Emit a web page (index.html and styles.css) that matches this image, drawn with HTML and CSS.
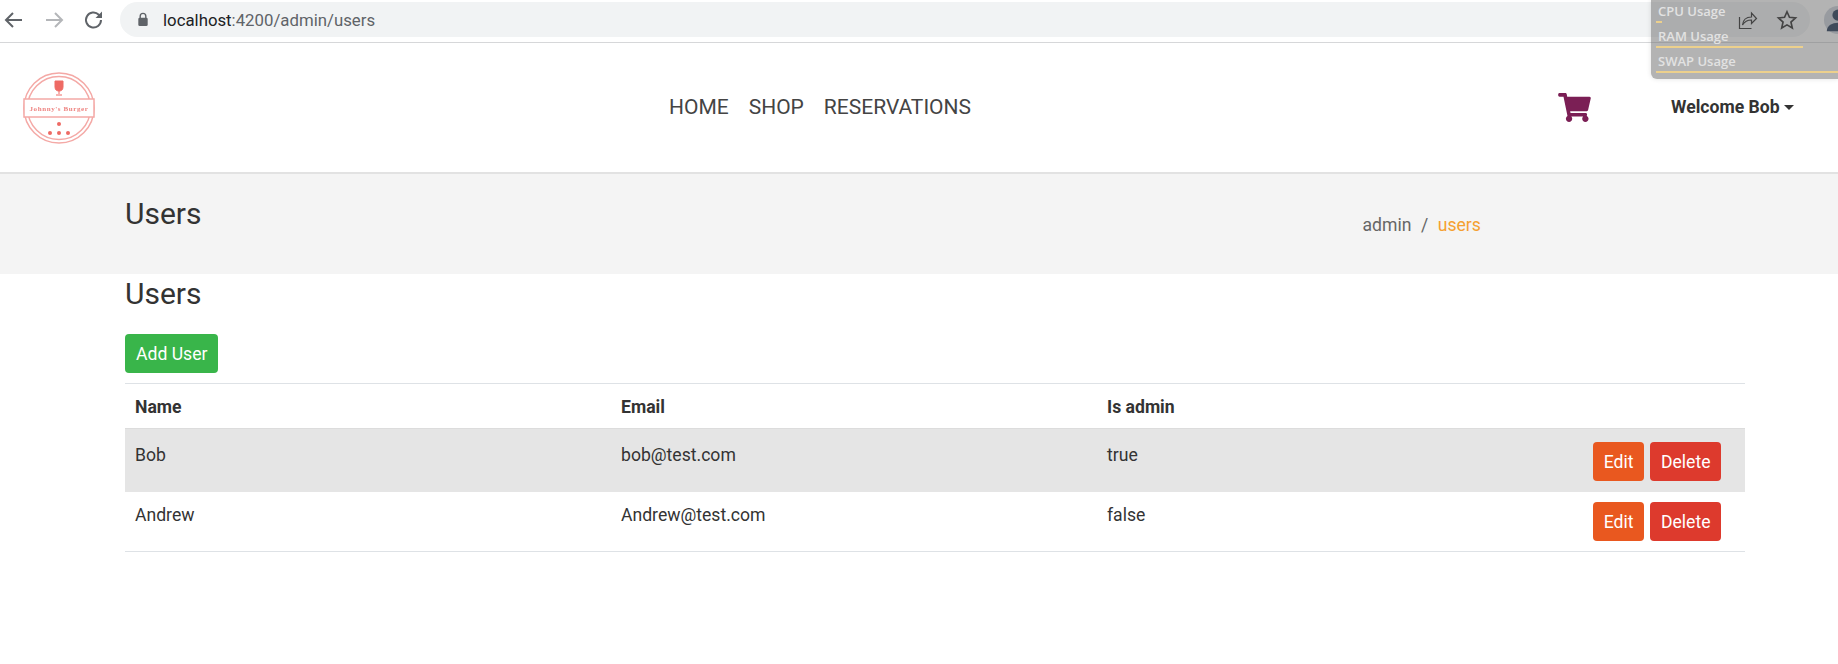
FILE: index.html
```html
<!DOCTYPE html>
<html lang="en">
<head>
  <meta charset="UTF-8" />
  <title>Users</title>
  <link rel="stylesheet" href="styles.css">
</head>
<body>
  <!-- browser toolbar -->
  <div class="chrome-bar">
    <svg class="chrome-icon" viewBox="0 0 24 24"><path d="M20 12H5M11 5l-7 7 7 7" fill="none" stroke="#5f6368" stroke-width="2"/></svg>
    <svg class="chrome-icon" viewBox="0 0 24 24"><path d="M4 12h15M13 5l7 7-7 7" fill="none" stroke="#b4b6b9" stroke-width="2"/></svg>
    <svg class="chrome-icon" viewBox="0 0 24 24"><path d="M19 12a7.5 7.5 0 1 1-2.2-5.3L19 9" fill="none" stroke="#5f6368" stroke-width="2"/><path d="M20 3.5V10h-6.500z" fill="#5f6368"/></svg>
    <div class="url-pill">
      <svg class="lock" viewBox="0 0 12 16"><path d="M3 7V4.500a3 3 0 0 1 6 0V7" fill="none" stroke="#5f6368" stroke-width="1.500"/><rect x="1" y="6" width="10" height="9" rx="1.500" fill="#5f6368"/></svg>
      <span class="url-host">localhost</span><span class="url-rest">:4200/admin/users</span>
      <div class="pill-actions">
        <svg class="share" viewBox="0 0 20 20"><path d="M1.500 7v11.500h12M4.500 15c.5-5 4-8 9-8V3l5 5.500-5 5V10c-4 0-7 1.500-9 5z" fill="none" stroke="#444" stroke-width="1.200"/></svg>
        <svg class="star" viewBox="0 0 24 24"><path d="M12 3l2.700 6.100 6.600.7-5 4.400 1.500 6.500-5.800-3.400-5.800 3.400 1.500-6.500-5-4.400 6.600-.7z" fill="none" stroke="#444" stroke-width="1.800"/></svg>
      </div>
    </div>
    <div class="avatar">
      <svg viewBox="0 0 20 20"><circle cx="10" cy="6.500" r="4" fill="#3f4a5a"/><path d="M2 18c0-4 4-6 8-6s8 2 8 6z" fill="#3f4a5a"/></svg>
    </div>
  </div>

  <!-- system monitor overlay -->
  <div class="monitor">
    <div class="monitor-row"><span>CPU Usage</span><div class="meter cpu"></div></div>
    <div class="monitor-row"><span>RAM Usage</span><div class="meter ram"></div></div>
    <div class="monitor-row"><span>SWAP Usage</span><div class="meter swap"></div></div>
  </div>

  <header class="site-header">
    <svg class="logo" viewBox="0 0 72 72">
      <circle cx="36" cy="36" r="35" fill="none" stroke="#f4a9a6" stroke-width="1.500"/>
      <circle cx="36" cy="36" r="31.500" fill="none" stroke="#f4a9a6" stroke-width="1.500"/>
      <rect x="1" y="27" width="70" height="18" fill="#fff" stroke="#f4a9a6" stroke-width="1.500"/>
      <text x="36" y="38.500" class="logo-text" text-anchor="middle">Johnny's Burger</text>
      <path d="M32 9h8v6c0 3-2 4-4 4s-4-1-4-4zM36 19v3M33 23h6" fill="#ee6a64" stroke="#ee6a64"/>
      <circle cx="36" cy="52" r="2" fill="#ee6a64"/>
      <circle cx="27" cy="61" r="2" fill="#ee6a64"/>
      <circle cx="36" cy="61" r="2" fill="#ee6a64"/>
      <circle cx="45" cy="61" r="2" fill="#ee6a64"/>
    </svg>
    <nav class="main-nav">
      <a>HOME</a>
      <a>SHOP</a>
      <a>RESERVATIONS</a>
    </nav>
    <svg class="cart" viewBox="0 0 576 512"><path d="M528.12 301.319l47.273-208C578.806 78.301 567.391 64 551.99 64H159.208l-9.166-44.81C147.758 8.021 137.93 0 126.529 0H24C10.745 0 0 10.745 0 24v16c0 13.255 10.745 24 24 24h69.883l70.248 343.435C147.325 417.1 136 435.222 136 456c0 30.928 25.072 56 56 56s56-25.072 56-56c0-15.674-6.447-29.835-16.824-40h209.647C430.447 426.165 424 440.326 424 456c0 30.928 25.072 56 56 56s56-25.072 56-56c0-22.172-12.888-41.332-31.579-50.405l5.517-24.276c3.413-15.018-8.002-29.319-23.403-29.319H218.117l-6.545-32h293.145c11.206 0 20.92-7.754 23.403-18.681z"/></svg>
    <div class="welcome">Welcome Bob<span class="caret"></span></div>
  </header>

  <section class="page-band">
    <h2 class="band-title">Users</h2>
    <div class="breadcrumb">
      <span>admin</span><span class="crumb-sep">/</span><span class="crumb-active">users</span>
    </div>
  </section>

  <main class="content">
    <h2 class="content-title">Users</h2>
    <button class="btn btn-add">Add User</button>
    <table class="user-table">
      <thead>
        <tr><th>Name</th><th>Email</th><th>Is admin</th><th></th></tr>
      </thead>
      <tbody>
        <tr class="row-first">
          <td>Bob</td><td>bob@test.com</td><td>true</td>
          <td><div class="actions"><button class="btn btn-edit">Edit</button><button class="btn btn-delete">Delete</button></div></td>
        </tr>
        <tr>
          <td>Andrew</td><td>Andrew@test.com</td><td>false</td>
          <td><div class="actions"><button class="btn btn-edit">Edit</button><button class="btn btn-delete">Delete</button></div></td>
        </tr>
      </tbody>
    </table>
  </main>
</body>
</html>
```
FILE: styles.css
```css
body {
  margin: 0;
  font-family: Roboto, Arial, sans-serif;
  font-size: 17.6px;
  color: #333;
  background: #fff;
  overflow: hidden;
}

.chrome-bar {
  display: flex;
  align-items: center;
  height: 39px;
  padding: 0 0 3px 2px;
  border-bottom: 1px solid #d6d7d9;
}
.chrome-icon {
  width: 24px;
  height: 24px;
  margin-right: 16px;
  flex: none;
}
.url-pill {
  display: flex;
  align-items: center;
  flex: none;
  width: 1690px;
  height: 35px;
  margin-left: -2px;
  padding-left: 17px;
  box-sizing: border-box;
  background: #f1f3f4;
  border-radius: 18px;
  font-size: 16.8px;
}
.lock {
  width: 12px;
  height: 15px;
  margin-right: 14px;
}
.url-host { color: #202124; }
.url-rest { color: #5f6368; }
.pill-actions {
  display: flex;
  align-items: center;
  gap: 18px;
  margin-left: auto;
  margin-right: 12px;
  position: relative;
  z-index: 2;
}
.share { width: 20px; height: 20px; }
.star { width: 22px; height: 22px; }
.avatar {
  width: 28px;
  height: 28px;
  margin-left: 14px;
  flex: none;
  background: #989ba0;
  border-radius: 50%;
  position: relative;
  z-index: 2;
}
.avatar svg { width: 28px; height: 28px; }

.monitor {
  position: absolute;
  top: 0;
  left: 1651px;
  right: 0;
  height: 79px;
  padding: 3px 0 0 5px;
  box-sizing: border-box;
  background: rgba(110, 110, 110, 0.52);
  border-bottom-left-radius: 6px;
  box-shadow: 0 0 5px rgba(0, 0, 0, 0.12);
  font-family: "Open Sans", sans-serif;
  font-size: 13px;
  font-weight: 600;
  color: #e2e2e2;
}
.monitor-row {
  height: 25px;
}
.monitor-row span {
  display: block;
  height: 18px;
  line-height: 17px;
  padding-left: 2px;
}
.meter {
  height: 2px;
  background: #ecd08c;
}
.cpu { width: 6px; }
.ram { width: 147px; }
.swap { width: 100%; }

.site-header {
  display: flex;
  align-items: center;
  height: 129px;
  border-bottom: 2px solid #e2e2e2;
}
.logo {
  width: 72px;
  height: 72px;
  margin-left: 23px;
  flex: none;
  filter: blur(0.4px);
}
.logo-text {
  font-family: "Liberation Serif", serif;
  font-size: 7px;
  font-weight: 700;
  letter-spacing: 0.6px;
  fill: #ee8380;
}
.main-nav {
  display: flex;
  gap: 20px;
  margin-left: 574px;
  margin-bottom: 2px;
  font-size: 21px;
  color: #444;
}
.cart {
  width: 33px;
  height: 29px;
  margin-left: 587px;
  margin-bottom: 1px;
  fill: #7b1f55;
}
.welcome {
  margin-left: 80px;
  margin-bottom: 2px;
  font-weight: 700;
  color: #333;
}
.caret {
  display: inline-block;
  margin-left: 4px;
  vertical-align: 3px;
  border-top: 5px solid #333;
  border-left: 5px solid transparent;
  border-right: 5px solid transparent;
}

.page-band {
  display: flex;
  height: 100px;
  padding-left: 125px;
  background: #f4f4f4;
  box-sizing: border-box;
}
.band-title {
  margin: 22px 0 0;
  font-size: 30px;
  font-weight: 400;
  line-height: 36px;
}
.breadcrumb {
  margin: 39px 0 0 1161px;
  color: #666;
  line-height: 24px;
}
.crumb-sep { margin: 0 9.5px; }
.crumb-active { color: #f5a030; }

.content {
  padding: 0 93px 0 125px;
}
.content-title {
  margin: 2px 0 22px;
  font-size: 30px;
  font-weight: 400;
  line-height: 36px;
}
.btn {
  height: 39px;
  padding: 0 11px;
  border: none;
  border-radius: 4px;
  font-family: inherit;
  font-size: 17.6px;
  color: #fff;
}
.btn-add { display: block; background: #39b54a; }
.btn-edit { background: #e9581f; }
.btn-delete { background: #dd3a2d; padding: 0 10.5px; }

.user-table {
  width: 100%;
  margin-top: 10px;
  border-collapse: collapse;
  table-layout: fixed;
}
.user-table th {
  box-sizing: border-box;
  width: 30%;
  padding: 11px 10px 9px;
  text-align: left;
  font-weight: 700;
  line-height: 24px;
  border-top: 1px solid #dee2e6;
  border-bottom: 1px solid #dcdcdc;
}
.user-table th:last-child { width: 10%; }
.user-table td {
  padding: 10px;
  line-height: 26px;
  vertical-align: top;
  border-bottom: 1px solid #dee2e6;
}
.row-first { background: #e5e5e5; }
.user-table .row-first td {
  padding-top: 13px;
  padding-bottom: 11px;
  border-bottom: none;
}
.actions {
  display: flex;
  justify-content: flex-end;
  gap: 6px;
  margin-right: 14px;
  margin-left: -40px;
}
```
